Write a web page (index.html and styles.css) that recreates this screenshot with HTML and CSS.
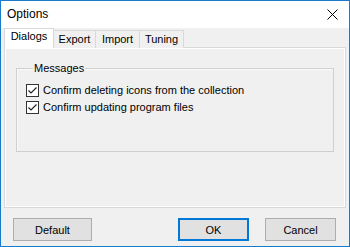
FILE: index.html
```html
<!DOCTYPE html>
<html lang="en">
<head>
    <meta charset="UTF-8">
    <meta name="viewport" content="width=device-width, initial-scale=1.0">
    <title>Options</title>
    <link rel="stylesheet" href="styles.css">
</head>
<body>
    <div class="window">
        <div class="titlebar">
            <span class="title">Options</span>
            <span class="close">
                <svg width="11" height="11" viewBox="0 0 11 11">
                    <path d="M0.5 0.5 L10.5 10.5 M10.5 0.5 L0.5 10.5" stroke="#000" stroke-width="1" fill="none"/>
                </svg>
            </span>
        </div>

        <div class="content">
            <div class="tabs">
                <div class="tab tab-active">Dialogs</div>
                <div class="tab tab-export">Export</div>
                <div class="tab tab-import">Import</div>
                <div class="tab tab-tuning">Tuning</div>
            </div>

            <div class="pane">
                <fieldset class="group">
                    <legend>Messages</legend>
                    <label class="check-row">
                        <span class="check-box">
                            <svg width="11" height="11" viewBox="0 0 11 11">
                                <path d="M1.5 5.5 L4 8 L9.5 2.5" stroke="#222" stroke-width="1.2" fill="none"/>
                            </svg>
                        </span>
                        Confirm deleting icons from the collection
                    </label>
                    <label class="check-row">
                        <span class="check-box">
                            <svg width="11" height="11" viewBox="0 0 11 11">
                                <path d="M1.5 5.5 L4 8 L9.5 2.5" stroke="#222" stroke-width="1.2" fill="none"/>
                            </svg>
                        </span>
                        Confirm updating program files
                    </label>
                </fieldset>
            </div>

            <div class="footer">
                <button class="btn btn-default">Default</button>
                <div class="spacer"></div>
                <button class="btn btn-ok">OK</button>
                <button class="btn btn-cancel">Cancel</button>
            </div>
        </div>
    </div>
</body>
</html>
```

FILE: styles.css
```css
html, body {
    margin: 0;
    padding: 0;
}

body {
    font-family: 'Liberation Sans', Arial, sans-serif;
    font-size: 11px;
    color: #000;
    background-color: #f0f0f0;
}

.window {
    width: 350px;
    height: 247px;
    box-sizing: border-box;
    border: 1px solid #1979ca;
    background-color: #f0f0f0;
    display: flex;
    flex-direction: column;
}

.titlebar {
    height: 27px;
    background-color: #fff;
    display: flex;
    align-items: center;
    padding: 0 11px 0 6px;
    box-sizing: border-box;
}

.title {
    font-size: 12px;
    flex: 1;
    padding-bottom: 1px;
}

.close {
    display: flex;
    margin-top: -1px;
}

.content {
    flex: 1;
    display: flex;
    flex-direction: column;
    padding: 0 3px;
}

/* tab strip */
.tabs {
    display: flex;
    align-items: flex-end;
    height: 20px;
    margin-bottom: -1px;
    position: relative;
    z-index: 1;
}

.tab {
    box-sizing: border-box;
    height: 18px;
    border: 1px solid #d9d9d9;
    border-bottom: none;
    background-color: #f0f0f0;
    text-align: center;
    line-height: 16px;
    margin-left: -1px;
}

.tab-active {
    width: 50px;
    height: 20px;
    margin-left: 0;
    background-color: #fff;
    line-height: 15px;
    position: relative;
    z-index: 2;
}

.tab-export {
    width: 43px;
}

.tab-import {
    width: 45px;
}

.tab-tuning {
    width: 45px;
}

/* page */
.pane {
    height: 161px;
    box-sizing: border-box;
    border: 1px solid #d9d9d9;
    background-color: #f0f0f0;
    box-shadow: inset 1px 1px 0 #fff, inset -1px -1px 0 #fff;
    padding: 14px 11px 0 11px;
}

.group {
    margin: 0;
    padding: 0 0 37px 9px;
    border: 1px solid #cfcfcf;
    box-shadow: inset 1px 1px 0 #fafafa;
    min-width: 0;
}

.group legend {
    padding: 0 1px;
    margin-left: 7px;
    line-height: 13px;
}

.check-row {
    display: flex;
    align-items: center;
    gap: 4px;
    height: 13px;
    line-height: 13px;
    margin-top: 4px;
}

.check-row:first-of-type {
    margin-top: 9px;
}

.check-box {
    width: 13px;
    height: 13px;
    box-sizing: border-box;
    border: 1px solid #333;
    background-color: #fff;
    display: flex;
    align-items: center;
    justify-content: center;
}

/* buttons */
.footer {
    display: flex;
    margin-top: 10px;
    padding: 0 10px 0 9px;
}

.spacer {
    flex: 1;
}

.btn {
    height: 23px;
    box-sizing: border-box;
    font-family: 'Liberation Sans', Arial, sans-serif;
    font-size: 11px;
    color: #000;
    background-color: #e1e1e1;
    border: 1px solid #adadad;
    padding: 0;
    border-radius: 0;
}

.btn-default {
    width: 79px;
}

.btn-ok {
    width: 71px;
    border: 2px solid #0078d7;
    margin-right: 16px;
}

.btn-cancel {
    width: 71px;
}
```
